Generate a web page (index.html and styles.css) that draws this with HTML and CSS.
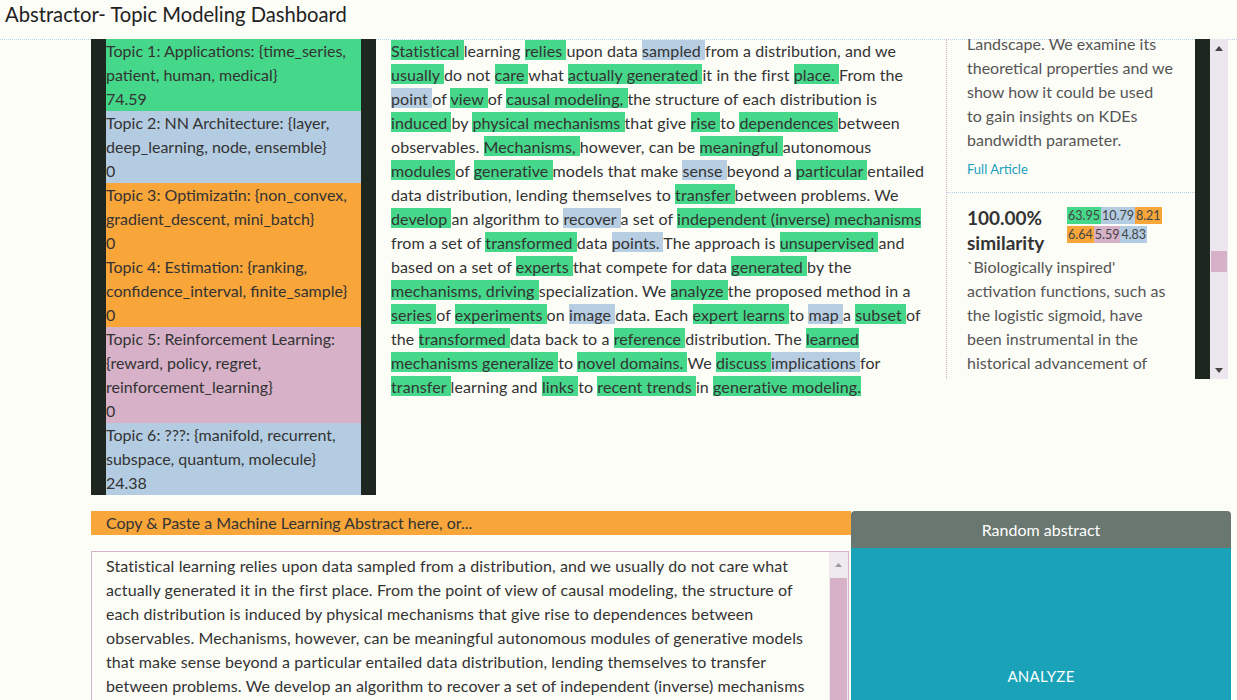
FILE: index.html
```html
<!DOCTYPE html>
<html lang="en">
<head>
<meta charset="utf-8">
<title>Abstractor- Topic Modeling Dashboard</title>
<link rel="stylesheet" href="styles.css">
</head>
<body>
<header class="app-header">
  <h1 class="app-title">Abstractor- Topic Modeling Dashboard</h1>
</header>
<main class="dashboard">
  <section class="top-row">
    <aside class="topics">
      <div class="topic c-green"><span class="topic-name">Topic 1: Applications: {time_series, patient, human, medical}</span><span class="topic-score">74.59</span></div>
      <div class="topic c-blue"><span class="topic-name">Topic 2: NN Architecture: {layer, deep_learning, node, ensemble}</span><span class="topic-score">0</span></div>
      <div class="topic c-orange"><span class="topic-name">Topic 3: Optimizatin: {non_convex, gradient_descent, mini_batch}</span><span class="topic-score">0</span></div>
      <div class="topic c-orange"><span class="topic-name">Topic 4: Estimation: {ranking, confidence_interval, finite_sample}</span><span class="topic-score">0</span></div>
      <div class="topic c-pink"><span class="topic-name">Topic 5: Reinforcement Learning: {reward, policy, regret, reinforcement_learning}</span><span class="topic-score">0</span></div>
      <div class="topic c-blue"><span class="topic-name">Topic 6: ???: {manifold, recurrent, subspace, quantum, molecule}</span><span class="topic-score">24.38</span></div>
    </aside>

    <article class="abstract">
      <p class="abstract-text"><span class="hl g">Statistical </span>learning <span class="hl g">relies </span>upon data <span class="hl b">sampled </span>from a distribution, and we <span class="hl g">usually </span>do not <span class="hl g">care </span>what <span class="hl g">actually generated </span>it in the first <span class="hl g">place. </span>From the <span class="hl b">point </span>of <span class="hl g">view </span>of <span class="hl g">causal modeling, </span>the structure of each distribution is <span class="hl g">induced </span>by <span class="hl g">physical mechanisms </span>that give <span class="hl g">rise </span>to <span class="hl g">dependences </span>between observables. <span class="hl g">Mechanisms, </span>however, can be <span class="hl g">meaningful </span>autonomous <span class="hl g">modules </span>of <span class="hl g">generative </span>models that make <span class="hl b">sense </span>beyond a <span class="hl g">particular </span>entailed data distribution, lending themselves to <span class="hl g">transfer </span>between problems. We <span class="hl g">develop </span>an algorithm to <span class="hl b">recover </span>a set of <span class="hl g">independent (inverse) mechanisms </span>from a set of <span class="hl g">transformed </span>data <span class="hl b">points. </span>The approach is <span class="hl g">unsupervised </span>and based on a set of <span class="hl g">experts </span>that compete for data <span class="hl g">generated </span>by the <span class="hl g">mechanisms, driving </span>specialization. We <span class="hl g">analyze </span>the proposed method in a <span class="hl g">series </span>of <span class="hl g">experiments </span>on <span class="hl b">image </span>data. Each <span class="hl g">expert learns </span>to <span class="hl b">map </span>a <span class="hl g">subset </span>of the <span class="hl g">transformed </span>data back to a <span class="hl g">reference </span>distribution. The <span class="hl g">learned mechanisms generalize </span>to <span class="hl g">novel domains. </span>We <span class="hl g">discuss </span><span class="hl b">implications </span>for <span class="hl g">transfer </span>learning and <span class="hl g">links </span>to <span class="hl g">recent trends </span>in <span class="hl g">generative modeling.</span></p>
    </article>

    <section class="similar">
      <div class="similar-list">
        <div class="card card-clipped">
          <p class="card-text">Landscape. We examine its theoretical properties and we show how it could be used to&nbsp;gain insights on KDEs bandwidth parameter.</p>
          <a class="card-link" href="#">Full Article</a>
        </div>
        <div class="card">
          <div class="card-head">
            <div class="sim-score">100.00%<br>similarity</div>
            <div class="badges">
              <div class="badge-row"><span class="badge c-green">63.95</span><span class="badge c-blue">10.79</span><span class="badge c-orange">8.21</span></div>
              <div class="badge-row"><span class="badge c-orange">6.64</span><span class="badge c-pink">5.59</span><span class="badge c-blue">4.83</span></div>
            </div>
          </div>
          <p class="card-text">`Biologically inspired' activation functions, such as the logistic sigmoid, have been instrumental in the historical advancement of machine learning. However in the field of deep learning, they have been largely displaced by rectified linear units.</p>
        </div>
      </div>
    </section>
    <div class="rail"></div>
    <div class="scrollbar">
      <div class="sb-btn"><svg width="8" height="5" viewBox="0 0 8 5"><path d="M0 5 L4 0 L8 5 Z" fill="#444"/></svg></div>
      <div class="sb-track"><div class="sb-thumb"></div></div>
      <div class="sb-btn"><svg width="8" height="5" viewBox="0 0 8 5"><path d="M0 0 L4 5 L8 0 Z" fill="#444"/></svg></div>
    </div>
  </section>

  <section class="input-row">
    <div class="input-col">
      <div class="input-label">Copy &amp; Paste a Machine Learning Abstract here, or...</div>
      <div class="input-box">
        <div class="input-text">Statistical learning relies upon data sampled from a distribution, and we usually do not care what actually generated it in the first place. From the point of view of causal modeling, the structure of each distribution is induced by physical mechanisms that give rise to dependences between observables. Mechanisms, however, can be meaningful autonomous modules of generative models that make sense beyond a particular entailed data distribution, lending themselves to transfer between problems. We develop an algorithm to recover a set of independent (inverse) mechanisms from a set of transformed data points. The approach is unsupervised and based on a set of experts that compete for data generated by the mechanisms, driving specialization. We analyze the proposed method in a series of experiments on image data. Each expert learns to map a subset of the transformed data back to a reference distribution. The learned mechanisms generalize to novel domains. We discuss implications for transfer learning and links to recent trends in generative modeling.</div>
        <div class="input-scroll">
          <div class="sb-btn sb-btn-light"><svg width="7" height="4" viewBox="0 0 7 4"><path d="M0 4 L3.5 0 L7 4 Z" fill="#9a9a9a"/></svg></div>
          <div class="input-thumb"></div>
        </div>
      </div>
    </div>
    <div class="btn-col">
      <button class="btn btn-random" type="button">Random abstract</button>
      <button class="btn btn-analyze" type="button">ANALYZE</button>
    </div>
  </section>
</main>
</body>
</html>
```

FILE: styles.css
```css
* { box-sizing: border-box; }

body {
  margin: 0;
  background: #fdfdf8;
  font-family: Lato, "Open Sans", sans-serif;
  color: #333;
}

.app-header {
  height: 40px;
  padding-left: 5px;
  border-bottom: 1px dotted #bcd5ea;
}

.app-title {
  margin: 0;
  font-size: 20.2px;
  font-weight: 400;
  line-height: 28px;
  color: #222;
}

.top-row {
  display: flex;
  align-items: flex-start;
  margin-left: 91px;
  margin-top: -1px;
}

/* topics */
.topics {
  width: 285px;
  border-left: 15px solid #1e2620;
  border-right: 15px solid #1e2620;
  font-size: 16px;
  line-height: 24px;
  color: #333;
}

.topic-name,
.topic-score { display: block; }

.c-green { background: #46d88a; }
.c-blue { background: #b3cce2; }
.c-orange { background: #f8a53a; }
.c-pink { background: #d6b1c8; }

/* abstract */
.abstract {
  width: 570px;
  padding: 0 17px 0 15px;
}

.abstract-text {
  margin: 0;
  font-size: 16px;
  line-height: 24px;
  letter-spacing: 0.1px;
  color: #333;
}

.hl { padding-top: 1px; }
.hl.g { background: #46d88a; }
.hl.b { background: #b6cde2; }

/* similar list */
.similar {
  width: 249px;
  height: 340px;
  overflow: hidden;
  border-left: 1px dotted #d6b1c8;
}

.similar-list {
  margin-top: -7px;
}

.card {
  padding: 0 21px 0 20px;
}

.card-clipped {
  border-bottom: 1px dotted #b8d0e6;
  padding-bottom: 13px;
}

.card-text {
  margin: 0;
  font-size: 16px;
  line-height: 24px;
  color: #555;
}

.card-link {
  display: block;
  margin-top: 7px;
  font-size: 13px;
  line-height: 20px;
  color: #1a9fbd;
  text-decoration: none;
}

.card-head {
  display: flex;
  gap: 18px;
  padding-top: 12px;
}

.sim-score {
  width: 82px;
  font-size: 19px;
  font-weight: 700;
  line-height: 25px;
  color: #333;
}

.badges {
  padding-top: 2px;
}

.badge-row {
  display: flex;
  margin-bottom: 2px;
}

.badge {
  font-size: 12.5px;
  line-height: 17px;
  padding: 0 1px;
  color: #444;
}

/* rail + scrollbar */
.rail {
  width: 15px;
  height: 340px;
  background: #1e2620;
}

.scrollbar {
  width: 18px;
  height: 340px;
  display: flex;
  flex-direction: column;
  background: #ece6ee;
}

.sb-btn {
  height: 18px;
  display: flex;
  align-items: center;
  justify-content: center;
}

.sb-track {
  flex: 1;
  padding-top: 194px;
}

.sb-thumb {
  height: 21px;
  margin: 0 1px;
  background: #d6b1c8;
}

/* input row */
.input-row {
  display: flex;
  margin: 16px 0 0 91px;
}

.input-col {
  width: 760px;
}

.input-label {
  height: 24px;
  padding-left: 15px;
  background: #f8a53a;
  font-size: 16px;
  line-height: 24px;
  color: #333;
}

.input-box {
  display: flex;
  width: 758px;
  height: 253px;
  margin-top: 16px;
  border: 1px solid #d6b1c8;
  overflow: hidden;
}

.input-text {
  flex: 1;
  padding: 2px 17px 0 14px;
  font-size: 16px;
  line-height: 24px;
  letter-spacing: 0.1px;
  color: #333;
}

.input-scroll {
  width: 19px;
  display: flex;
  flex-direction: column;
  background: #eeeaee;
}

.sb-btn-light {
  height: 26px;
}

.input-thumb {
  flex: 1;
  margin: 0 1px;
  background: #d6b1c8;
}

/* buttons */
.btn-col {
  width: 380px;
  display: flex;
  flex-direction: column;
}

.btn {
  border: none;
  font-family: inherit;
  color: #fff;
  cursor: pointer;
}

.btn-random {
  height: 37px;
  background: #6a7771;
  border-radius: 4px 4px 0 0;
  font-size: 16px;
}

.btn-analyze {
  flex: 1;
  background: #19a2b8;
  font-size: 15px;
  letter-spacing: 0.3px;
}
```
